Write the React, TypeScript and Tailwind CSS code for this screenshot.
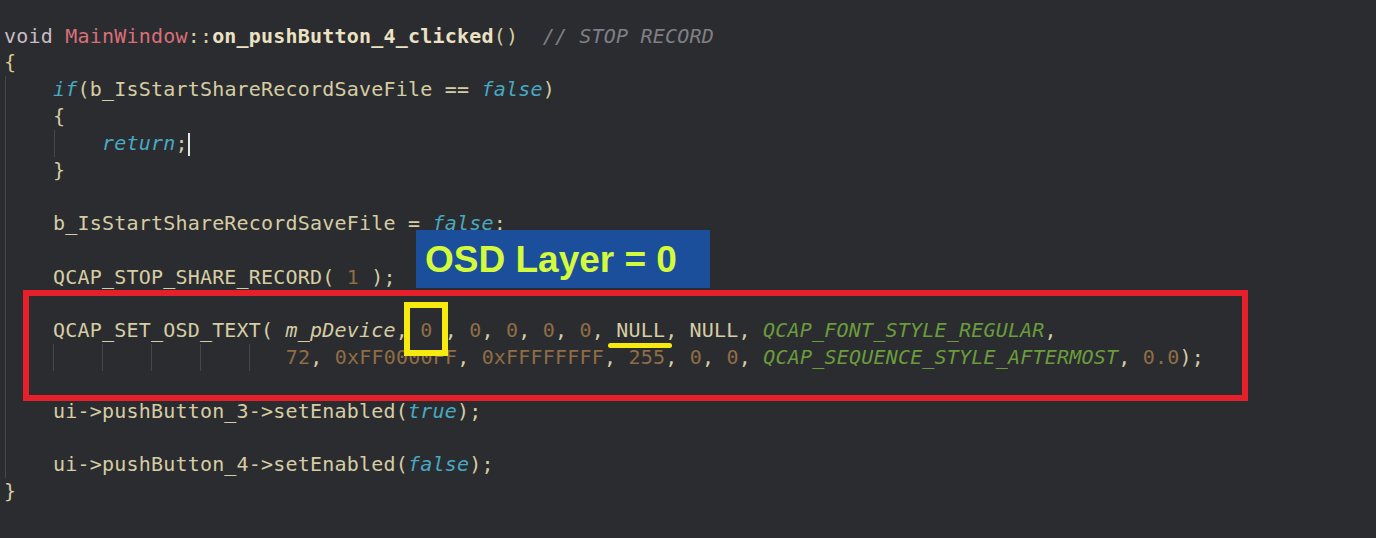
const T = ({ children }: { children: React.ReactNode }) => <span className="text-[#d6cda4]">{children}</span>;
const N = ({ children }: { children: React.ReactNode }) => <span className="text-[#8f6d46]">{children}</span>;
const K = ({ children }: { children: React.ReactNode }) => <span className="italic text-[#47a9c3]">{children}</span>;
const G = ({ children }: { children: React.ReactNode }) => <span className="italic text-[#6a9c3d]">{children}</span>;

function Line({ children }: { children?: React.ReactNode }) {
  return <div className="h-[26.8px] leading-[26.8px] whitespace-pre">{children ?? " "}</div>;
}

function Guide({ w }: { w: string }) {
  return <span className={`self-stretch border-l border-[#45474b] ${w}`} />;
}

export default function App() {
  return (
    <div className="relative h-[538px] w-[1376px] overflow-hidden bg-[#2b2c2f]">
      <div
        className="pl-[4px] pt-[22.6px] text-[20px] tracking-[0.2px] text-[#d6cda4]"
        style={{ fontFamily: '"DejaVu Sans Mono", "Liberation Mono", monospace' }}
      >
        <Line>
          <span className="text-[#cbbcc6]">void</span> <span className="text-[#d96f79]">MainWindow</span>
          <T>::</T>
          <span className="font-bold text-[#ebe2c4]">on_pushButton_4_clicked</span>
          <T>()</T>  <span className="italic text-[#7f8086]">// STOP RECORD</span>
        </Line>
        <Line>
          <span className="text-[#d9c98c]">{"{"}</span>
        </Line>
        <div className="ml-[1px] border-l border-[#45474b] pl-[47px]">
          <Line>
            <K>if</K>
            <T>(b_IsStartShareRecordSaveFile == </T>
            <K>false</K>
            <T>)</T>
          </Line>
          <Line>{"{"}</Line>
          <div className="ml-[1px] border-l border-[#45474b] pl-[47px]">
            <Line>
              <K>return</K>
              <T>;</T>
              <span className="inline-block h-[23px] w-[2px] bg-[#e6e6e6] align-middle" />
            </Line>
          </div>
          <Line>{"}"}</Line>
          <Line />
          <Line>
            <T>b_IsStartShareRecordSaveFile = </T>
            <K>false</K>
            <T>;</T>
          </Line>
          <Line />
          <Line>
            <T>QCAP_STOP_SHARE_RECORD( </T>
            <N>1</N>
            <T> );</T>
          </Line>
          <Line />
          <Line>
            <T>QCAP_SET_OSD_TEXT( </T>
            <span className="italic">m_pDevice</span>
            <T>, </T>
            <N>0</N> , <N>0</N>, <N>0</N>, <N>0</N>, <N>0</N>, NULL, NULL, <G>QCAP_FONT_STYLE_REGULAR</G>,
          </Line>
          <div className="flex h-[26.8px] leading-[26.8px] whitespace-pre">
            <Guide w="w-[49px]" />
            <Guide w="w-[49px]" />
            <Guide w="w-[49px]" />
            <Guide w="w-[49px]" />
            <Guide w="w-[36.75px]" />
            <span>
              <N>72</N>, <N>0xFF0000FF</N>, <N>0xFFFFFFFF</N>, <N>255</N>, <N>0</N>, <N>0</N>,{" "}
              <G>QCAP_SEQUENCE_STYLE_AFTERMOST</G>, <N>0.0</N>);
            </span>
          </div>
          <Line />
          <Line>
            ui-&gt;pushButton_3-&gt;setEnabled(<K>true</K>);
          </Line>
          <Line />
          <Line>
            ui-&gt;pushButton_4-&gt;setEnabled(<K>false</K>);
          </Line>
        </div>
        <Line>{"}"}</Line>
      </div>

      {/* annotations laid over the code */}
      <div className="absolute left-[416px] top-[230px] flex h-[58px] w-[294px] items-center bg-[#1b4f9b] pl-[9px]">
        <span
          className="text-[37px] font-bold leading-none text-[#d4fa3c]"
          style={{ fontFamily: '"Liberation Sans", Arial, sans-serif' }}
        >
          OSD Layer = 0
        </span>
      </div>
      <div className="absolute left-[23px] top-[290px] h-[111px] w-[1225px] border-[6px] border-[#e5202b]" />
      <div className="absolute left-[404px] top-[302px] h-[54px] w-[44px] border-[6px] border-[#f7ea0e]" />
      <div className="absolute left-[608px] top-[343px] h-[5px] w-[64px] rounded-full bg-[#f7ea0e]" />
    </div>
  );
}
